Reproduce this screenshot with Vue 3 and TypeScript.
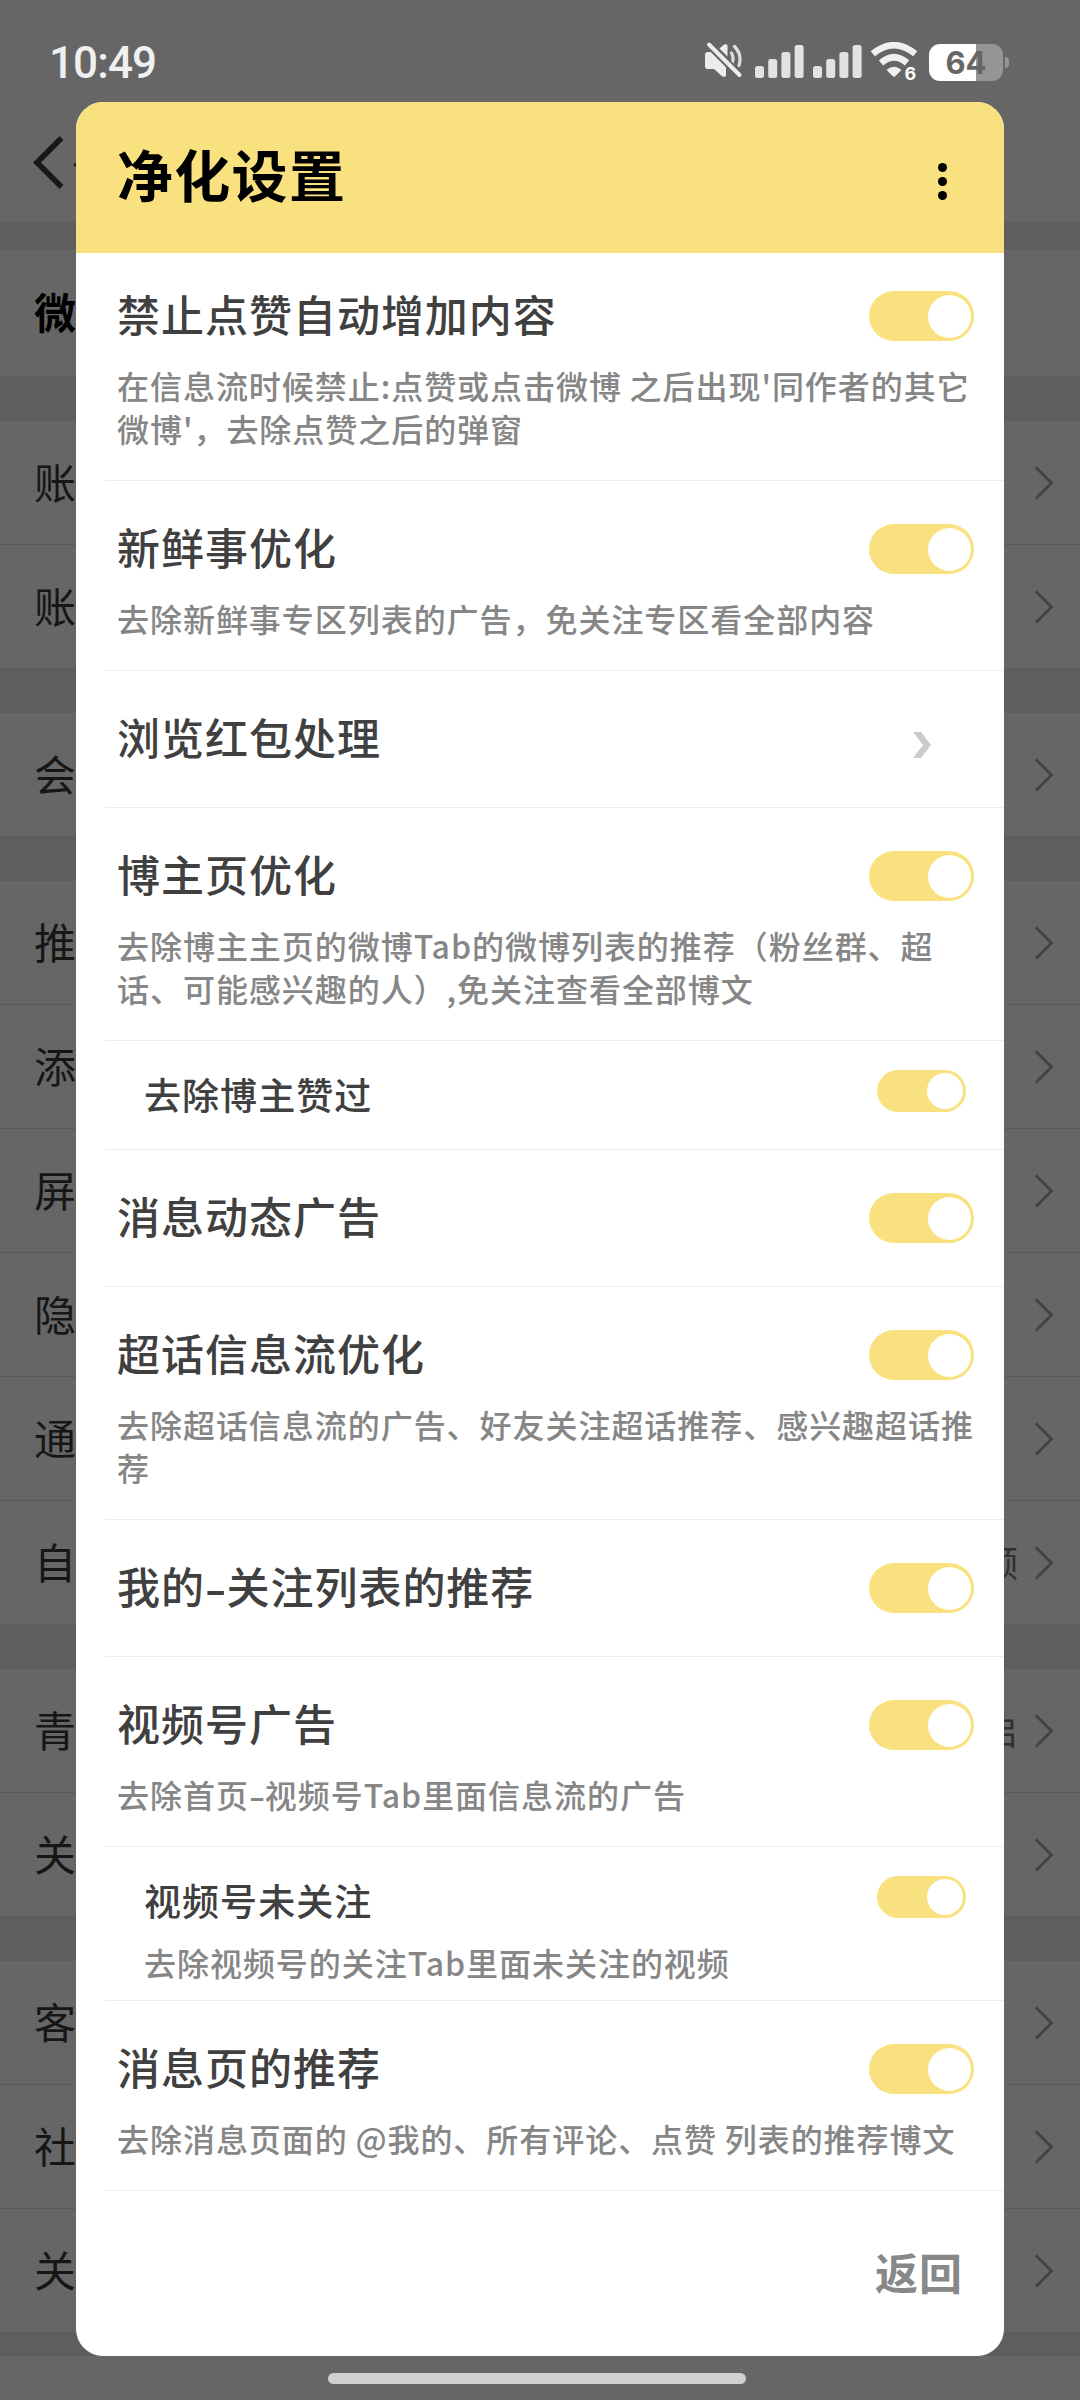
<script setup lang="ts">
interface PageRow {
  label: string
  value?: string
}
interface Option {
  title: string
  desc?: string
  kind: 'switch' | 'link'
  sub?: boolean
}

const groups: PageRow[][] = [
  [{ label: '账' }, { label: '账' }],
  [{ label: '会' }],
  [
    { label: '推' },
    { label: '添' },
    { label: '屏' },
    { label: '隐' },
    { label: '通' },
    { label: '自', value: '频' },
  ],
  [{ label: '青', value: '启' }, { label: '关' }],
  [{ label: '客' }, { label: '社' }, { label: '关' }],
]

const options: Option[] = [
  {
    title: '禁止点赞自动增加内容',
    desc: "在信息流时候禁止:点赞或点击微博 之后出现'同作者的其它\n微博'，去除点赞之后的弹窗",
    kind: 'switch',
  },
  { title: '新鲜事优化', desc: '去除新鲜事专区列表的广告，免关注专区看全部内容', kind: 'switch' },
  { title: '浏览红包处理', kind: 'link' },
  {
    title: '博主页优化',
    desc: '去除博主主页的微博Tab的微博列表的推荐（粉丝群、超\n话、可能感兴趣的人）,免关注查看全部博文',
    kind: 'switch',
  },
  { title: '去除博主赞过', kind: 'switch', sub: true },
  { title: '消息动态广告', kind: 'switch' },
  {
    title: '超话信息流优化',
    desc: '去除超话信息流的广告、好友关注超话推荐、感兴趣超话推\n荐',
    kind: 'switch',
  },
  { title: '我的-关注列表的推荐', kind: 'switch' },
  { title: '视频号广告', desc: '去除首页-视频号Tab里面信息流的广告', kind: 'switch' },
  { title: '视频号未关注', desc: '去除视频号的关注Tab里面未关注的视频', kind: 'switch', sub: true },
  { title: '消息页的推荐', desc: '去除消息页面的 @我的、所有评论、点赞 列表的推荐博文', kind: 'switch' },
]

// Splits on hyphens so that they can be set wider than the font's own glyph.
const parts = (text: string): string[] => text.split(/(-)/).filter(Boolean)
</script>

<template>
  <div class="screen">
    <header class="status">
      <span class="clock">10:49</span>
      <div class="status-icons">
        <svg class="mute" width="40" height="38" viewBox="0 0 40 38">
          <path d="M1 13.5Q1 11 3.5 11H7L22 26v8.5q-1.200 2.500-4 .7L10 28H3.500Q1 28 1 25.500Z" fill="#ececec" />
          <path d="M15.500 7.500 20 3.500q2.600-1 3.500 1V15.500Z" fill="#ececec" />
          <path d="M27.500 12q2.500 4 1 9M30.500 5.500q8 8 4.500 19" fill="none" stroke="#dedede" stroke-width="3.200" stroke-linecap="round" />
          <path d="M5 3.500 35.500 34" stroke="#666" stroke-width="8" />
          <path d="M5 3.500 35.500 34" stroke="#ececec" stroke-width="4" stroke-linecap="round" />
        </svg>
        <svg v-for="n in 2" :key="n" class="signal" width="49" height="33" viewBox="0 0 49 33">
          <g fill="#e2e2e2">
            <rect x="0" y="21" width="9" height="12" rx="2.500" />
            <rect x="13.200" y="14" width="9" height="19" rx="2.500" />
            <rect x="26.400" y="7" width="9" height="26" rx="2.500" />
            <rect x="39.600" y="0" width="9" height="33" rx="2.500" />
          </g>
        </svg>
        <svg class="wifi" width="50" height="46" viewBox="0 0 50 46">
          <g fill="none" stroke="#f0f0f0">
            <path d="M2.800 11.800Q24 -5.500 45.200 11.800" stroke-width="6.500" />
            <path d="M11 21Q24 9.500 37 21" stroke-width="6.500" />
          </g>
          <path d="M16.500 28Q24 21.500 31.500 28L25.500 34Q24 35.500 22.500 34Z" fill="#f0f0f0" />
          <text x="34.500" y="38" class="wifi-gen">6</text>
        </svg>
        <div class="battery"><span>64</span></div>
        <i class="nub" />
      </div>
    </header>

    <nav class="page-nav">
      <svg width="32" height="56" viewBox="0 0 32 56">
        <path d="M28.500 3 4 27.500 28.500 52" fill="none" stroke="#181818" stroke-width="5.600" />
      </svg>
      <span class="page-title">设</span>
    </nav>

    <main class="page">
      <div class="page-head">微</div>
      <section v-for="(group, g) in groups" :key="g" class="group">
        <div v-for="(row, r) in group" :key="r" class="page-row">
          <span class="page-label">{{ row.label }}</span>
          <span v-if="row.value" class="page-value">{{ row.value }}</span>
          <svg width="20" height="34" viewBox="0 0 20 34">
            <path d="M2 1.500 17.500 17 2 32.500" fill="none" stroke="#424242" stroke-width="2.800" />
          </svg>
        </div>
      </section>
    </main>

    <div class="dialog">
      <div class="dialog-head">
        <h1>净化设置</h1>
        <div class="more"><i /><i /><i /></div>
      </div>
      <div class="options">
        <div v-for="(o, i) in options" :key="i" class="option" :class="{ sub: o.sub, plain: !o.desc }">
          <div class="line">
            <h2>
              <template v-for="(p, k) in parts(o.title)" :key="k"><span v-if="p === '-'" class="dash">-</span><template v-else>{{ p }}</template></template>
            </h2>
            <div v-if="o.kind === 'switch'" class="switch"><i /></div>
            <svg v-else class="go" width="18" height="26" viewBox="0 0 18 26">
              <path d="M0 0H8L18 13 8 26H0L10 13Z" fill="#ccc" />
            </svg>
          </div>
          <p v-if="o.desc">
            <template v-for="(p, k) in parts(o.desc)" :key="k"><span v-if="p === '-'" class="dash">-</span><template v-else>{{ p }}</template></template>
          </p>
        </div>
      </div>
      <div class="actions"><span>返回</span></div>
    </div>

    <div class="home-bar" />
  </div>
</template>

<style>
body {
  margin: 0;
  background: #666;
}
</style>

<style scoped>
.screen {
  position: relative;
  display: flex;
  flex-direction: column;
  width: 1080px;
  height: 2400px;
  overflow: hidden;
  background: #666;
  font-family: "Noto Sans CJK SC", "Noto Sans", sans-serif;
}

/* status bar */
.status {
  display: flex;
  justify-content: space-between;
  height: 102px;
  padding: 0 71px 0 49px;
  box-sizing: border-box;
}
.clock {
  margin-top: 37px;
  font: 500 44px/52px Roboto, sans-serif;
  letter-spacing: -0.900px;
  color: #f0f0f0;
}
.status-icons {
  display: flex;
  align-items: flex-start;
}
.mute {
  margin: 41px 11px 0 0;
}
.signal {
  margin: 45px 9px 0 0;
}
.wifi {
  margin: 42px 9px 0 -1px;
}
.wifi-gen {
  font: 700 18px Inter, sans-serif;
  fill: #fff;
  stroke: #666;
  stroke-width: 3px;
  paint-order: stroke;
}
.battery {
  display: flex;
  align-items: center;
  justify-content: center;
  width: 74px;
  height: 37px;
  margin-top: 43.500px;
  border-radius: 11px;
  background: linear-gradient(90deg, #fff 47px, #959595 47px);
  color: #666;
  font: 700 31px/37px Inter, sans-serif;
}
.nub {
  width: 4px;
  height: 11px;
  margin: 57px 0 0 2px;
  border-radius: 0 5px 5px 0;
  background: #959595;
}

/* dimmed page below the dialog */
.page-nav {
  display: flex;
  align-items: center;
  height: 120px;
  padding: 1px 0 0 33px;
  box-sizing: border-box;
}
.page-title {
  margin: 8px 0 0 7px;
  font-size: 48px;
  color: #1a1a1a;
}
.page {
  border-top: 28px solid #5e5e5e;
}
.page-head {
  height: 126px;
  padding-left: 34px;
  font-size: 42px;
  font-weight: 700;
  line-height: 121px;
  box-sizing: border-box;
  color: #000;
}
.group {
  border-top: 45px solid #5e5e5e;
}
.group:last-child {
  border-bottom: 24px solid #5e5e5e;
}
.page-row {
  display: flex;
  align-items: center;
  height: 123px;
  padding: 0 26px 0 34px;
}
.page-row + .page-row {
  border-top: 1px solid #5a5a5a;
}
.page-label {
  flex: 1;
  margin-bottom: 4px;
  font-size: 42px;
  line-height: 60px;
  color: #161616;
}
.page-value {
  margin: 0 16px 4px 0;
  font-size: 36px;
  line-height: 52px;
  color: #303030;
}

/* dialog */
.dialog {
  position: absolute;
  top: 102px;
  left: 76px;
  display: flex;
  flex-direction: column;
  width: 928px;
  height: 2254px;
  overflow: hidden;
  border-radius: 27px;
  background: #fff;
}
.dialog-head {
  display: flex;
  justify-content: space-between;
  height: 151px;
  padding: 0 57px 0 42px;
  box-sizing: border-box;
  background: #f8e17e;
}
h1 {
  margin: 31px 0 0 -1px;
  font-size: 56px;
  font-weight: 700;
  line-height: 80px;
  letter-spacing: 1.300px;
  color: #000;
}
.more {
  display: flex;
  flex-direction: column;
  gap: 5px;
  padding-top: 61px;
}
.more i {
  width: 9px;
  height: 9px;
  border-radius: 50%;
  background: #000;
}
.option {
  height: 190px;
  margin-left: 29px;
  padding: 43px 30px 0 13px;
  box-sizing: border-box;
  border-bottom: 1px solid #ececec;
}
.option:first-child {
  height: 228px;
  padding-top: 38px;
}
.option:nth-child(4),
.option:nth-child(7) {
  height: 233px;
}
.option.plain {
  height: 137px;
}
.option.sub {
  height: 154px;
  padding: 29px 38px 0 40px;
}
.option.sub.plain {
  height: 109px;
}
.line {
  display: flex;
  align-items: flex-start;
  justify-content: space-between;
  height: 50px;
}
h2 {
  margin: -8px 0 0 -1px;
  font-size: 43px;
  font-weight: 500;
  line-height: 60px;
  letter-spacing: 0.980px;
  white-space: nowrap;
  color: #404040;
}
.dash {
  display: inline-block;
  width: 0.500em;
  letter-spacing: 0;
  text-align: center;
  transform: scale(1.450, 1.100);
}
p {
  margin: 23px -10px 0 -1px;
  font-size: 32px;
  font-weight: 500;
  line-height: 43px;
  letter-spacing: 0.960px;
  word-spacing: -0.500px;
  white-space: pre;
  color: #868686;
}
.sub h2 {
  margin-top: -6px;
  font-size: 37px;
  letter-spacing: 1.050px;
}
.sub p {
  margin-top: 15px;
}
.switch {
  display: flex;
  justify-content: flex-end;
  width: 105px;
  height: 50px;
  padding: 3.500px;
  box-sizing: border-box;
  border-radius: 25px;
  background: #f8e17e;
}
.switch i {
  width: 43px;
  height: 43px;
  border-radius: 50%;
  background: #fff;
}
.sub .switch {
  width: 89px;
  height: 42px;
  padding: 3px;
  border-radius: 21px;
}
.sub .switch i {
  width: 36px;
  height: 36px;
}
.go {
  margin: 18px 43px 0 0;
}
.actions {
  display: flex;
  justify-content: flex-end;
  padding: 50px 41px 0 0;
}
.actions span {
  font-size: 43px;
  font-weight: 700;
  line-height: 60px;
  letter-spacing: 1px;
  color: #888;
}

.home-bar {
  position: absolute;
  bottom: 16px;
  left: 328px;
  width: 418px;
  height: 11px;
  border-radius: 6px;
  background: #d0d0d0;
}
</style>
